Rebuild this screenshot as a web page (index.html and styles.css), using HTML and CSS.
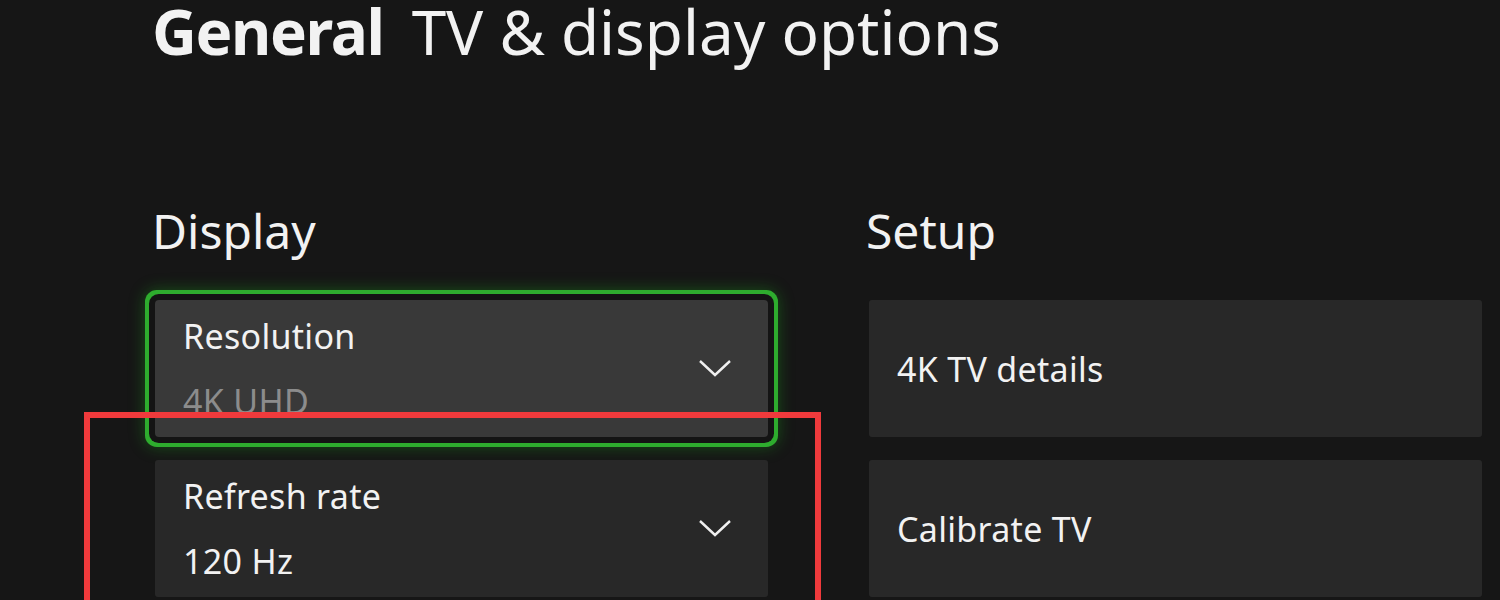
FILE: index.html
```html
<!DOCTYPE html>
<html>
<head>
	<title>TV &amp; display options</title>
	<meta name="viewport" content="width=device-width,initial-scale=1.0" />
	<link rel="stylesheet" href="styles.css">
</head>
<body>
	<div class="page">
		<h1 class="title"><b>General</b> TV &amp; display options</h1>

		<div class="columns">
			<div class="col">
				<h2 class="group">Display</h2>
				<div class="card pick focus">
					<div class="texts">
						<div class="label">Resolution</div>
						<div class="value dim">4K UHD</div>
					</div>
					<svg class="chev" viewBox="0 0 34 20"><polyline points="2,3 17,17 32,3" /></svg>
				</div>
				<div class="card pick">
					<div class="texts">
						<div class="label">Refresh rate</div>
						<div class="value">120 Hz</div>
					</div>
					<svg class="chev" viewBox="0 0 34 20"><polyline points="2,3 17,17 32,3" /></svg>
				</div>
			</div>
			<div class="col">
				<h2 class="group">Setup</h2>
				<div class="card link">4K TV details</div>
				<div class="card link">Calibrate TV</div>
			</div>
		</div>

		<div class="marker"></div>
	</div>
</body>
</html>
```

FILE: styles.css
```css
body {
	margin: 0;
	padding: 0;
	background-color: #161616;
	color: #f2f2f2;
	font-family: "Noto Sans", "Open Sans", sans-serif;
	overflow: hidden;
}
.page {
	position: relative;
	height: 600px;
	padding-left: 155px;
}
.title {
	margin: 0 0 0 -3px;
	height: 201px;
	font-size: 62px;
	font-weight: 400;
	line-height: 62px;
	white-space: nowrap;
}
.title b {
	font-weight: 700;
	letter-spacing: -1.4px;
	margin-right: 12px;
}
.columns {
	display: flex;
	gap: 101px;
}
.col {
	width: 613px;
	display: flex;
	flex-direction: column;
	gap: 23px;
}
.group {
	margin: 0 0 0 -3px;
	height: 76px;
	font-size: 48px;
	font-weight: 400;
	line-height: 60px;
}
.card {
	height: 137px;
	background-color: #282828;
	border-radius: 3px;
	box-sizing: border-box;
	padding: 0 28px;
	display: flex;
	align-items: center;
	font-size: 34px;
	letter-spacing: 0.3px;
}
.pick {
	justify-content: space-between;
	padding-right: 36px;
}
.focus {
	background-color: #393939;
	box-shadow: 0 0 0 6px #141414, 0 0 0 10px #2eac2e, 0 0 16px 10px rgba(30, 190, 30, 0.35);
	border-radius: 4px;
}
.texts {
	display: flex;
	flex-direction: column;
	gap: 25px;
}
.label, .value {
	line-height: 40px;
}
.dim {
	color: #8c8c8c;
}
.chev {
	width: 34px;
	height: 20px;
	margin-bottom: 2px;
	fill: none;
	stroke: #f0f0f0;
	stroke-width: 2.4;
}
/* highlight box drawn over the screenshot */
.marker {
	position: absolute;
	left: 84px;
	top: 412px;
	width: 725px;
	height: 220px;
	border: 6px solid #f03a3c;
}
```
